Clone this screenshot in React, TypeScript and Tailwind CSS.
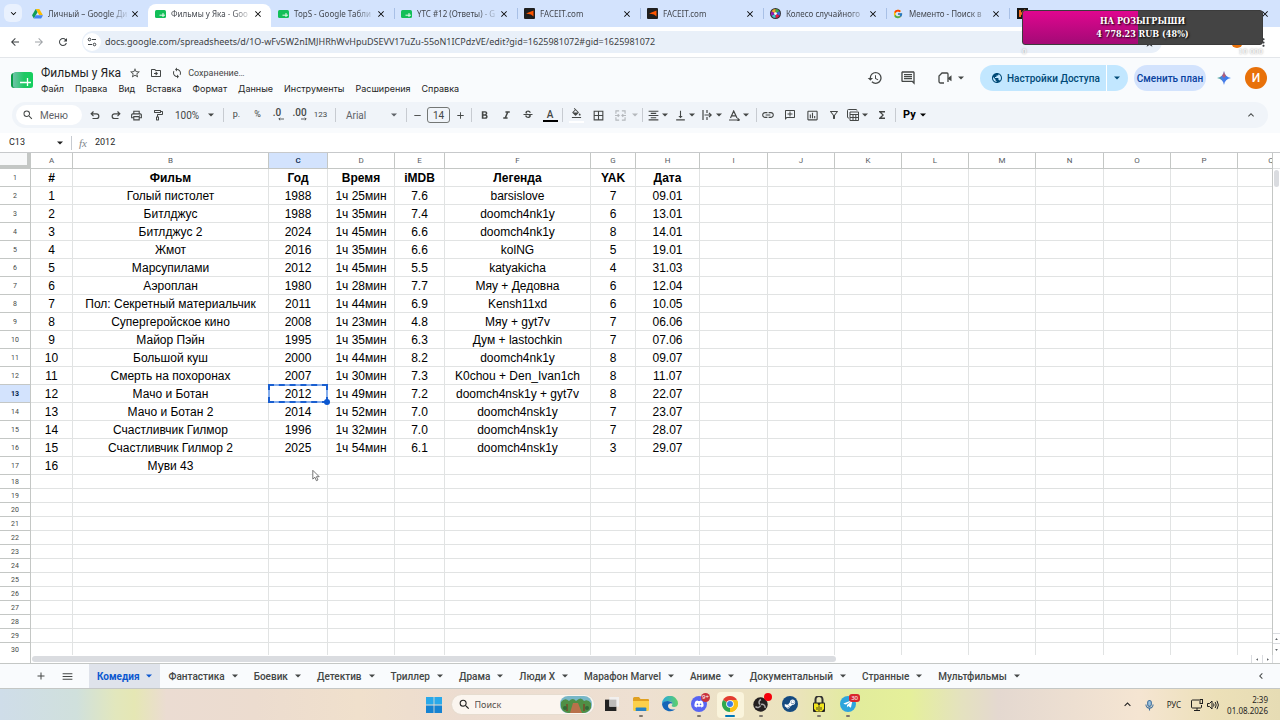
import React from 'react';
import {
    MdStarBorder, MdOutlineDriveFileMove, MdSync, MdHistory, MdOutlineComment, MdPublic, MdSearch,
    MdOutlinePrint, MdOutlineImagesearchRoller, MdFormatBold, MdFormatItalic, MdStrikethroughS, MdFormatColorFill,
    MdBorderAll, MdFormatAlignCenter, MdVerticalAlignBottom, MdLink, MdOutlineAddComment, MdInsertChartOutlined,
    MdOutlineFilterAlt, MdFunctions, MdKeyboardArrowUp, MdKeyboardArrowDown, MdKeyboardArrowLeft, MdAdd, MdRemove,
    MdMenu, MdArrowBack, MdArrowForward, MdRefresh, MdClose, MdMoreVert,
} from 'react-icons/md';
import { FcGoogle } from 'react-icons/fc';
import { FaDiscord, FaSteamSymbol, FaTelegramPlane } from 'react-icons/fa';

const browserTabs = [
    { title: 'Личный – Google Ди', icon: 'drive' },
    { title: 'Фильмы у Яка - Goo', icon: 'sheet', active: true },
    { title: 'TopS - Google Табли', icon: 'sheet' },
    { title: 'YTC #12 (Ответы) - G', icon: 'sheet' },
    { title: 'FACEIT.com', icon: 'faceit' },
    { title: 'FACEIT.com', icon: 'faceit' },
    { title: 'Колесо случайного', icon: 'wheel' },
    { title: 'Мементо - Поиск в', icon: 'google' },
];

const menus = ['Файл', 'Правка', 'Вид', 'Вставка', 'Формат', 'Данные', 'Инструменты', 'Расширения', 'Справка'];

const columns = [
    { name: 'A', width: 'w-[42px]' },
    { name: 'B', width: 'w-[196px]' },
    { name: 'C', width: 'w-[59px]' },
    { name: 'D', width: 'w-[67px]' },
    { name: 'E', width: 'w-[50px]' },
    { name: 'F', width: 'w-[146px]' },
    { name: 'G', width: 'w-[45px]' },
    { name: 'H', width: 'w-[64px]' },
    { name: 'I', width: 'w-[68px]' },
    { name: 'J', width: 'w-[67px]' },
    { name: 'K', width: 'w-[67px]' },
    { name: 'L', width: 'w-[67px]' },
    { name: 'M', width: 'w-[67px]' },
    { name: 'N', width: 'w-[68px]' },
    { name: 'O', width: 'w-[67px]' },
    { name: 'P', width: 'w-[67px]' },
    { name: 'Q', width: 'w-[67px]' },
];

const rows = [
    ['#', 'Фильм', 'Год', 'Время', 'iMDB', 'Легенда', 'YAK', 'Дата'],
    ['1', 'Голый пистолет', '1988', '1ч 25мин', '7.6', 'barsislove', '7', '09.01'],
    ['2', 'Битлджус', '1988', '1ч 35мин', '7.4', 'doomch4nk1y', '6', '13.01'],
    ['3', 'Битлджус 2', '2024', '1ч 45мин', '6.6', 'doomch4nk1y', '8', '14.01'],
    ['4', 'Жмот', '2016', '1ч 35мин', '6.6', 'kolNG', '5', '19.01'],
    ['5', 'Марсупилами', '2012', '1ч 45мин', '5.5', 'katyakicha', '4', '31.03'],
    ['6', 'Аэроплан', '1980', '1ч 28мин', '7.7', 'Мяу + Дедовна', '6', '12.04'],
    ['7', 'Пол: Секретный материальчик', '2011', '1ч 44мин', '6.9', 'Kensh11xd', '6', '10.05'],
    ['8', 'Супергеройское кино', '2008', '1ч 23мин', '4.8', 'Мяу + gyt7v', '7', '06.06'],
    ['9', 'Майор Пэйн', '1995', '1ч 35мин', '6.3', 'Дум + lastochkin', '7', '07.06'],
    ['10', 'Большой куш', '2000', '1ч 44мин', '8.2', 'doomch4nk1y', '8', '09.07'],
    ['11', 'Смерть на похоронах', '2007', '1ч 30мин', '7.3', 'K0chou + Den_Ivan1ch', '8', '11.07'],
    ['12', 'Мачо и Ботан', '2012', '1ч 49мин', '7.2', 'doomch4nsk1y + gyt7v', '8', '22.07'],
    ['13', 'Мачо и Ботан 2', '2014', '1ч 52мин', '7.0', 'doomch4nsk1y', '7', '23.07'],
    ['14', 'Счастливчик Гилмор', '1996', '1ч 32мин', '7.0', 'doomch4nsk1y', '7', '28.07'],
    ['15', 'Счастливчик Гилмор 2', '2025', '1ч 54мин', '6.1', 'doomch4nsk1y', '3', '29.07'],
    ['16', 'Муви 43'],
];

const sheetTabs = ['Комедия', 'Фантастика', 'Боевик', 'Детектив', 'Триллер', 'Драма', 'Люди X', 'Марафон Marvel', 'Аниме', 'Документальный', 'Странные', 'Мультфильмы'];

function Caret() {
    return (
        <svg viewBox="0 0 6 4" className="w-[6px] h-[4px] shrink-0" fill="currentColor">
            <path d="M0 .5h6L3 3.5z" />
        </svg>
    );
}

function SheetLogo({ className }: { className: string }) {
    return (
        <svg viewBox="0 0 22 16" className={className}>
            <defs>
                <linearGradient id="sheetLogo" x1="0" x2="1">
                    <stop offset="0" stopColor="#6fc3a8" />
                    <stop offset=".55" stopColor="#1fc763" />
                    <stop offset="1" stopColor="#14cf5e" />
                </linearGradient>
            </defs>
            <rect width="20" height="15" y="1" rx="3" fill="#0a9c48" />
            <rect x="2" width="20" height="16" rx="2.5" fill="url(#sheetLogo)" />
            <path d="M9 10.500h11M16.500 6v8" stroke="#fff" strokeWidth="1.300" fill="none" />
        </svg>
    );
}

function TabIcon({ icon }: { icon: string }) {
    if (icon === 'drive') {
        return (
            <svg viewBox="0 0 24 22" className="w-[11px] h-[10px]">
                <path d="M8 0h8l8 14h-8z" fill="#fbbc04" />
                <path d="M8 0l4 7L4 21 0 14z" fill="#0f9d58" />
                <path d="M8 14h16l-4 7H4z" fill="#4285f4" />
            </svg>
        );
    }
    if (icon === 'faceit') {
        return (
            <svg viewBox="0 0 11 11" className="w-[11px] h-[11px]">
                <rect width="11" height="11" rx="1" fill="#1f1f1f" />
                <path d="M2 5.500L9.500 2.500v6L7 6.500z" fill="#ff5500" />
            </svg>
        );
    }
    if (icon === 'wheel') {
        return (
            <svg viewBox="0 0 12 12" className="w-[11px] h-[11px]">
                <circle cx="6" cy="6" r="6" fill="#333" />
                <path d="M6 6V1a5 5 0 0 1 4.300 2.500z" fill="#3cb44b" />
                <path d="M6 6l4.300-2.500a5 5 0 0 1 0 5z" fill="#4363d8" />
                <path d="M6 6l4.300 2.500A5 5 0 0 1 6 11z" fill="#e6194b" />
                <path d="M6 6v5a5 5 0 0 1-4.300-2.500z" fill="#42c0d4" />
                <path d="M6 6L1.700 8.500a5 5 0 0 1 0-5z" fill="#911eb4" />
                <path d="M6 6L1.700 3.500A5 5 0 0 1 6 1z" fill="#f0a830" />
                <circle cx="6" cy="6" r="1.500" fill="#fff" />
            </svg>
        );
    }
    if (icon === 'google') return <FcGoogle size={10} />;
    return (
        <svg viewBox="0 0 11 8" className="w-[11px] h-[8px]">
            <rect width="11" height="8" rx="1.500" fill="#12bf58" />
            <path d="M4.500 5.200H10M8 3v4" stroke="#fff" strokeWidth=".9" />
        </svg>
    );
}

function TabStrip() {
    return (
        <div className="flex h-[27px] bg-[#d3e3fd] font-['Noto_Sans',sans-serif]">
            <div className="w-[25px] shrink-0 pl-1 pt-1">
                <button aria-label="Поиск вкладок" className="flex items-center justify-center w-[18px] h-[18px] rounded-md bg-[#e9f1fe]">
                    <MdKeyboardArrowDown size={11} />
                </button>
            </div>
            {browserTabs.map((tab, i) => (
                <div
                    key={i}
                    className={tab.active
                        ? 'flex items-center w-[123px] shrink-0 mt-1 pb-1 pl-[7px] bg-white rounded-t-lg'
                        : 'flex items-center w-[123px] shrink-0 mt-1 pb-1'}
                >
                    {!tab.active && <span className={i > 2 ? 'w-px h-[11px] mr-[6px] bg-[#a8c0e6]' : 'w-px mr-[6px]'} />}
                    <span className="w-[12px] mr-1 flex shrink-0"><TabIcon icon={tab.icon} /></span>
                    <span className="w-[82px] shrink-0 whitespace-nowrap text-[8px] leading-[14px] text-[#43474e] [mask-image:linear-gradient(to_right,black_75%,transparent)]">{tab.title}</span>
                    <button aria-label="Закрыть вкладку"><MdClose size={10} /></button>
                </div>
            ))}
            <div className="flex items-center flex-1 mt-1 pb-1 pr-[10px]">
                <span className="w-px h-[11px] mr-[7px] bg-[#a8c0e6]" />
                <svg viewBox="0 0 11 11" className="w-[11px] h-[11px]">
                    <rect width="11" height="11" fill="#161616" />
                    <path d="M3 2v7M8.500 2L4.500 5.500l4 3.500" stroke="#f26b1d" strokeWidth="2" fill="none" />
                </svg>
                <button aria-label="Закрыть окно" className="ml-auto"><MdClose size={10} /></button>
            </div>
        </div>
    );
}

function AddressBar() {
    return (
        <div className="flex items-center h-[31px] pl-[9px] pr-[10px] bg-white border-b border-[#e3e6ea] font-['Noto_Sans',sans-serif] text-[#3c4043]">
            <button aria-label="Назад" className="w-3 mr-3"><MdArrowBack size={12} /></button>
            <button aria-label="Вперёд" className="w-3 mr-3 text-[#a0a4a8]"><MdArrowForward size={12} /></button>
            <button aria-label="Обновить" className="w-3 mr-[13px]"><MdRefresh size={12} /></button>
            <div className="flex items-center flex-1 h-[22px] pl-[1px] rounded-full bg-[#e9f0f9]">
                <span className="flex items-center justify-center w-[18px] h-[18px] rounded-full bg-white">
                    <svg viewBox="0 0 10 10" className="w-[10px] h-[10px]" fill="none" stroke="currentColor">
                        <circle cx="2.500" cy="2.500" r="1.300" />
                        <path d="M5 2.500h4M1 7.500h4" />
                        <circle cx="7.500" cy="7.500" r="1.300" />
                    </svg>
                </span>
                <input
                    aria-label="Адресная строка"
                    readOnly
                    className="flex-1 ml-1 bg-transparent text-[9px] leading-[14px] outline-none"
                    value="docs.google.com/spreadsheets/d/1O-wFv5W2nIMJHRhWvHpuDSEVV17uZu-55oN1ICPdzVE/edit?gid=1625981072#gid=1625981072"
                />
                <MdStarBorder size={11} className="mr-[7px]" />
            </div>
            <div className="flex items-center justify-end w-[108px] gap-[14px]">
                <span className="w-3 h-3 rounded-full bg-[#e8710a]" />
                <MdMoreVert size={13} />
            </div>
        </div>
    );
}

function DocHeader() {
    return (
        <header className="flex items-center h-[44px] pl-[11px] pr-[13px] text-[#444746]">
            <SheetLogo className="w-[22px] h-[16px] shrink-0" />
            <div className="ml-2 pt-px">
                <div className="flex items-center h-[16px]">
                    <h1 className="text-xs leading-4 text-[#1f1f1f]">Фильмы у Яка</h1>
                    <button aria-label="Пометить" className="ml-2"><MdStarBorder size={12} /></button>
                    <button aria-label="Переместить" className="ml-[9px]"><MdOutlineDriveFileMove size={12} /></button>
                    <MdSync size={12} className="ml-[9px]" />
                    <span className="ml-[5px] text-[9px] leading-3">Сохранение…</span>
                </div>
                <nav className="flex gap-[11px] h-[16px] font-['Inter',sans-serif] text-[#1f1f1f]">
                    {menus.map((menu) => (
                        <button key={menu} className="text-[9px] leading-4">{menu}</button>
                    ))}
                </nav>
            </div>
            <div className="flex items-center ml-auto mb-1">
                <button aria-label="История версий"><MdHistory size={16} /></button>
                <button aria-label="Комментарии" className="ml-[17px]"><MdOutlineComment size={16} /></button>
                <button aria-label="Видеовстреча" className="flex items-center gap-[6px] ml-[22px]">
                    <svg viewBox="0 0 14 12" className="w-[14px] h-[12px]" fill="none" stroke="currentColor" strokeWidth="1.300">
                        <path d="M6 11H2.500A1.500 1.500 0 0 1 1 9.500V4L4 1h5a1 1 0 0 1 1 1v8" />
                        <path d="M10 6l3.500-2.800v6.100L10 7z" fill="currentColor" stroke="none" />
                    </svg>
                    <Caret />
                </button>
                <div className="flex ml-4 h-[26px] rounded-full bg-[#c2e7ff] text-[#004a77] overflow-hidden">
                    <button className="flex items-center gap-1 w-[127px] pl-[11px] text-[10px] font-medium whitespace-nowrap border-r border-white">
                        <MdPublic size={12} className="shrink-0" />Настройки Доступа
                    </button>
                    <button aria-label="Быстрый доступ" className="flex items-center w-[21px] pl-[7px]"><Caret /></button>
                </div>
                <button className="ml-[6px] w-[72px] h-[26px] rounded-full bg-[#d3e3fd] text-[#0842a0] text-[10px] font-medium whitespace-nowrap">Сменить план</button>
                <button aria-label="Gemini" className="ml-[11px]">
                    <svg viewBox="0 0 14 14" className="w-[14px] h-[14px]">
                        <defs>
                            <linearGradient id="spark" x1="0" y1=".6" x2="1" y2=".4">
                                <stop offset="0" stopColor="#3fae6a" />
                                <stop offset=".4" stopColor="#4a7de8" />
                                <stop offset="1" stopColor="#2f7bf0" />
                            </linearGradient>
                        </defs>
                        <path d="M7 0c.6 4 3 6.400 7 7-4 .6-6.400 3-7 7-.6-4-3-6.400-7-7 4-.6 6.400-3 7-7z" fill="url(#spark)" />
                        <path d="M7 0c.3 2 1 3.600 2.100 4.800L7 7 4.900 4.800C6 3.600 6.700 2 7 0z" fill="#e0524a" opacity=".7" />
                    </svg>
                </button>
                <button aria-label="Аккаунт" className="ml-[14px] w-[22px] h-[22px] rounded-full bg-[#e8710a] text-white text-xs font-medium">И</button>
            </div>
        </header>
    );
}

function Tool({ label, children, narrow }: { label: string; children: React.ReactNode; narrow?: boolean }) {
    return (
        <button aria-label={label} className={narrow ? 'flex items-center justify-center w-[21px] h-5' : 'flex items-center justify-center w-[22px] h-5'}>
            {children}
        </button>
    );
}

function DropTool({ label, children }: { label: string; children: React.ReactNode }) {
    return (
        <button aria-label={label} className="flex items-center h-5">
            <span className="flex justify-center w-4">{children}</span>
            <span className="flex justify-center w-2"><Caret /></span>
        </button>
    );
}

function Divider() {
    return <span className="w-px h-[14px] bg-[#c7cbd1]" />;
}

function Toolbar() {
    return (
        <div className="flex items-center h-[26px] mx-3 pl-1 pr-[11px] rounded-full bg-[#f0f4f9] text-[#444746] text-[10px]">
            <button className="flex items-center gap-[6px] w-[66px] h-5 pl-[6px] mr-[2px] rounded-full bg-white text-[#5f6368]">
                <MdSearch size={12} className="text-[#444746]" />Меню
            </button>
            <Tool label="Отменить" narrow>
                <svg viewBox="0 0 10 10" className="w-[10px] h-[10px]" fill="none" stroke="currentColor" strokeWidth="1.200"><path d="M3.500 1.500L1.200 3.800l2.300 2.300M1.200 3.800H6.500a2.300 2.300 0 0 1 0 4.700H2.500" /></svg>
            </Tool>
            <Tool label="Повторить" narrow>
                <svg viewBox="0 0 10 10" className="w-[10px] h-[10px]" fill="none" stroke="currentColor" strokeWidth="1.200"><path d="M6.500 1.500l2.300 2.300-2.300 2.300M8.800 3.800H3.500a2.300 2.300 0 0 0 0 4.700h4" /></svg>
            </Tool>
            <Tool label="Печать" narrow><MdOutlinePrint size={13} /></Tool>
            <Tool label="Копировать форматирование" narrow><MdOutlineImagesearchRoller size={12} className="-scale-x-100" /></Tool>
            <button className="flex items-center justify-between w-[55px] pl-[7px] pr-[9px]">100%<Caret /></button>
            <Divider />
            <div className="flex pl-[2px] pr-1">
                <Tool label="Денежный формат" narrow><span className="text-[9px]">р.</span></Tool>
                <Tool label="Процентный формат" narrow><span className="text-[9px]">%</span></Tool>
                <Tool label="Уменьшить число знаков" narrow><span className="flex flex-col text-[10px] font-medium leading-[8px] pr-[3px]">.0<DecimalArrow /></span></Tool>
                <Tool label="Увеличить число знаков" narrow><span className="flex flex-col text-[10px] font-medium leading-[8px]">.00<DecimalArrow flip /></span></Tool>
                <Tool label="Другие форматы" narrow><span className="text-[8px]">123</span></Tool>
            </div>
            <Divider />
            <button className="flex items-center justify-between w-[70px] pl-[10px] pr-[9px] text-[#5f6368]">Arial<Caret /></button>
            <Divider />
            <button aria-label="Уменьшить шрифт" className="flex justify-center w-5"><MdRemove size={11} /></button>
            <input aria-label="Размер шрифта" readOnly value="14" className="w-[23px] h-4 rounded-[3px] border border-[#747775] text-center text-[10px] leading-[14px]" />
            <button aria-label="Увеличить шрифт" className="flex justify-center w-5 mr-px"><MdAdd size={11} /></button>
            <Divider />
            <div className="flex px-px">
                <Tool label="Полужирный"><MdFormatBold size={13} /></Tool>
                <Tool label="Курсив"><MdFormatItalic size={13} /></Tool>
                <Tool label="Зачеркнутый"><MdStrikethroughS size={12} /></Tool>
                <Tool label="Цвет текста"><span className="flex flex-col items-center w-[15px] border-b-2 border-black text-[10px] font-medium leading-[11px]">A</span></Tool>
            </div>
            <Divider />
            <div className="flex items-center pl-[2px] pr-[3px]">
                <Tool label="Цвет заливки"><span className="flex justify-center w-[15px] pb-[3px] border-b-2 border-white"><MdFormatColorFill size={11} viewBox="0 0 24 20" /></span></Tool>
                <Tool label="Границы"><MdBorderAll size={13} /></Tool>
                <Tool label="Объединить ячейки">
                    <svg viewBox="0 0 12 12" className="w-[11px] h-[11px] text-[#b4b8bc]" fill="none" stroke="currentColor" strokeWidth="1.200"><path d="M4.500 1H1v3M7.500 1H11v3M4.500 11H1V8M7.500 11H11V8M0 6h4M8 6h4M3 4.500L4.500 6 3 7.500M9 4.500L7.500 6 9 7.500" /></svg>
                </Tool>
                <span className="flex justify-center w-2 text-[#b4b8bc]"><Caret /></span>
            </div>
            <Divider />
            <div className="flex gap-[3px] pl-[2px] pr-[6px]">
                <DropTool label="Горизонтальное выравнивание"><MdFormatAlignCenter size={13} /></DropTool>
                <DropTool label="Вертикальное выравнивание"><MdVerticalAlignBottom size={13} /></DropTool>
                <DropTool label="Перенос текста">
                    <svg viewBox="0 0 10 10" className="w-[10px] h-[10px]" fill="none" stroke="currentColor" strokeWidth="1.200"><path d="M1 0v10M5 0v3M5 7v3M2.500 5H9M7 2.800L9.200 5 7 7.200" /></svg>
                </DropTool>
                <DropTool label="Поворот текста">
                    <svg viewBox="0 0 11 11" className="w-[11px] h-[11px]" fill="none" stroke="currentColor" strokeWidth="1.200"><path d="M1.500 8L4.700 1 8 8M2.600 5.800h4.200M0 10h10M8.500 8.200L10.300 10 8.500 11" /></svg>
                </DropTool>
            </div>
            <Divider />
            <div className="flex items-center pr-[2px]">
                <Tool label="Вставить ссылку"><MdLink size={14} /></Tool>
                <Tool label="Добавить комментарий"><MdOutlineAddComment size={12} className="-scale-x-100" /></Tool>
                <Tool label="Вставить диаграмму"><MdInsertChartOutlined size={13} /></Tool>
                <Tool label="Создать фильтр"><MdOutlineFilterAlt size={12} /></Tool>
                <DropTool label="Преобразовать в таблицу">
                    <svg viewBox="0 0 12 12" className="w-[12px] h-[12px]" fill="none" stroke="currentColor"><path d="M2 9H1.500a1 1 0 0 1-1-1V1.500a1 1 0 0 1 1-1H9a1 1 0 0 1 1 1M3 3h8.500v8.500H3zM3 5.500h8.500M3 8.500h8.500M6 5.500v6M8.800 5.500v6" /></svg>
                </DropTool>
                <span className="ml-[2px]"><Tool label="Функции"><MdFunctions size={12} /></Tool></span>
            </div>
            <Divider />
            <button className="flex items-center gap-1 ml-[7px] text-[11px] leading-5 font-bold text-black">Py<Caret /></button>
            <button aria-label="Скрыть меню" className="ml-auto"><MdKeyboardArrowUp size={12} /></button>
        </div>
    );
}

function DecimalArrow({ flip }: { flip?: boolean }) {
    return (
        <svg viewBox="0 0 7 4" className={flip ? 'w-[6px] h-[4px] self-end -scale-x-100' : 'w-[6px] h-[4px] self-end -mr-[3px]'} fill="none" stroke="currentColor">
            <path d="M7 2H1M2.500.5L1 2l1.500 1.500" />
        </svg>
    );
}

function FormulaBar() {
    return (
        <div className="flex items-center h-5 mt-[5px] bg-white border-b border-[#c7c9cb] text-[9px] text-[#1f1f1f]">
            <button className="flex items-center justify-between w-[71px] pl-[9px] pr-2">C13<Caret /></button>
            <Divider />
            <label htmlFor="formula" className="ml-[7px] w-[16px] font-['Liberation_Serif',serif] italic text-[11px] leading-4 text-[#80868b]">fx</label>
            <input id="formula" readOnly value="2012" className="flex-1 outline-none" />
        </div>
    );
}

function Grid() {
    return (
        <div className="flex flex-1 min-h-0 bg-white">
            <div className="flex-1 min-w-0 overflow-hidden">
                <table className="table-fixed w-max border-separate border-spacing-0 font-['Liberation_Sans',Arial,sans-serif] text-black">
                    <thead>
                        <tr className="h-4">
                            <th className="w-[31px] h-4 p-0 border-r-4 border-b-4 border-[#c4c7c5] bg-[#f8f9fa]" aria-label="Выделить все" />
                            {columns.map((col) => (
                                <th
                                    key={col.name}
                                    className={`${col.width} h-4 p-0 border-r border-b border-[#c4c7c5] font-['Roboto',sans-serif] text-[8px] leading-[14px] ${col.name === 'C' ? 'bg-[#d3e3fd] font-medium text-[#041e49]' : 'font-normal text-[#575b5f]'}`}
                                >
                                    {col.name}
                                </th>
                            ))}
                        </tr>
                    </thead>
                    <tbody>
                        {Array.from({ length: 30 }, (_, r) => {
                            const cells = rows[r] ?? [];
                            const height = r < rows.length ? 'h-[18px]' : 'h-[14px]';
                            return (
                                <tr key={r} className={height}>
                                    <th className={`${height} p-0 border-r border-b border-[#c4c7c5] font-['Roboto',sans-serif] text-[7px] leading-[12px] ${r === 12 ? 'bg-[#d3e3fd] font-bold text-[#041e49]' : 'font-normal text-[#444746]'}`}>
                                        {r + 1}
                                    </th>
                                    {columns.map((col, c) => (
                                        <td
                                            key={col.name}
                                            className={`${height} p-0 border-r border-b border-[#e1e3e3] text-center whitespace-nowrap text-xs leading-[12px] ${r === 0 ? 'font-bold' : ''} ${r === 12 && c === 2 ? 'relative' : ''}`}
                                        >
                                            {cells[c]}
                                            {r === 12 && c === 2 && (
                                                <>
                                                    <span className="absolute -left-px -top-px -right-px -bottom-px border-2 border-[#86aeec]" />
                                                    <span className="absolute -left-px -top-px -right-px -bottom-px border-2 border-dashed border-[#1a5fd0]" />
                                                    <span className="absolute -right-[3px] -bottom-[3px] w-[6px] h-[6px] rounded-full bg-[#0b57d0]" />
                                                </>
                                            )}
                                        </td>
                                    ))}
                                </tr>
                            );
                        })}
                    </tbody>
                </table>
            </div>
            <div className="flex flex-col items-center w-2 border-l border-[#c4c7c5] text-[#5f6368]">
                <span className="w-full h-4 border-b border-[#e1e3e3]" />
                <span className="w-[5px] h-[17px] mt-px rounded-full bg-[#dadce0]" />
                <span className="flex items-center justify-center w-full h-[10px] mt-auto border-t border-[#dadce0]"><ScrollArrow up /></span>
                <span className="flex items-center justify-center w-full h-[12px] border-t border-[#dadce0]"><ScrollArrow /></span>
            </div>
        </div>
    );
}

function ScrollArrow({ up }: { up?: boolean }) {
    return (
        <svg viewBox="0 0 4 3" className={up ? 'w-[3px] h-[2px] rotate-180' : 'w-[3px] h-[2px]'} fill="currentColor"><path d="M0 0h4L2 3z" /></svg>
    );
}

function HorizontalScroll() {
    return (
        <div className="flex items-center h-2 bg-white text-[#5f6368]">
            <span className="w-[31px] h-full border-r border-[#c4c7c5]" />
            <div className="flex-1 px-px"><span className="block w-[66%] h-[6px] rounded-full bg-[#dadce0]" /></div>
            <span className="flex items-center justify-center w-[11px] h-full border-l border-[#dadce0]"><svg viewBox="0 0 3 4" className="w-[2px] h-[3px]" fill="currentColor"><path d="M3 0v4L0 2z" /></svg></span>
            <span className="flex items-center justify-center w-[11px] h-full border-x border-[#dadce0]"><svg viewBox="0 0 3 4" className="w-[2px] h-[3px]" fill="currentColor"><path d="M0 0v4l3-2z" /></svg></span>
            <span className="w-[7px]" />
        </div>
    );
}

function SheetTabs() {
    return (
        <div className="flex items-center h-[26px] pl-[35px] pr-[13px] border-y border-[#c4c7c5] bg-[#f9fbfd] text-[#444746]">
            <button aria-label="Добавить лист" className="w-[13px]"><MdAdd size={12} /></button>
            <button aria-label="Все листы" className="w-[14px] ml-[13px]"><MdMenu size={13} /></button>
            <div className="flex h-full ml-[14px]">
                {sheetTabs.map((name, i) => (
                    <button
                        key={name}
                        className={i === 0
                            ? 'flex items-center gap-[7px] h-full px-2 bg-[#dfe3eb] text-[#0b57d0] text-[10px] font-bold whitespace-nowrap'
                            : 'flex items-center gap-[7px] h-full px-2 text-[10px] font-medium whitespace-nowrap'}
                    >
                        {name}<Caret />
                    </button>
                ))}
            </div>
            <button aria-label="Скрыть панель" className="ml-auto"><MdKeyboardArrowLeft size={12} /></button>
        </div>
    );
}

function TaskApp({ label, running, active, children }: { label: string; running?: boolean; active?: boolean; children: React.ReactNode }) {
    return (
        <button aria-label={label} className={active ? 'flex flex-col items-center w-[27px] h-[26px] mx-[3px] pt-1 rounded bg-[#faf4dc]' : 'flex flex-col items-center w-[25px] h-[26px] mx-[2px] pt-1'}>
            <span className="relative flex items-center justify-center h-4">{children}</span>
            {running && <span className={active ? 'w-[10px] h-[2px] mt-[3px] rounded-full bg-[#0078b8]' : 'w-1 h-[2px] mt-[3px] rounded-full bg-[#7d766c]'} />}
        </button>
    );
}

function Taskbar() {
    return (
        <footer className="grid grid-cols-[1fr_auto_1fr] items-center h-[31px] bg-[linear-gradient(90deg,#cfdde9_0%,#d0e0dc_6%,#e2e7bd_9%,#e5e7b4_10.5%,#ebdcd2_13%,#ecdccf_20%,#f0e0cc_28%,#ecdcd0_36%,#eee0d2_50%,#ebe3bd_62%,#e2ec9c_67%,#e5f09a_71%,#e4e2be_75%,#e4d8d0_78%,#f5e5d2_89%,#ece0b8_95%,#e6dcb4_100%)] font-['Noto_Sans',sans-serif] text-[#1f1f1f]">
            <span />
            <div className="flex items-center pl-2">
                <button aria-label="Пуск" className="w-[16px] mr-[9px]">
                    <svg viewBox="0 0 16 16" className="w-4 h-4">
                        <path d="M0 0h7.600v7.600H0zM8.400 0H16v7.600H8.400z" fill="#29a9ea" />
                        <path d="M0 8.400h7.600V16H0zM8.400 8.400H16V16H8.400z" fill="#1583d2" />
                    </svg>
                </button>
                <div className="flex items-center w-[144px] h-[21px] mr-[3px] pl-[6px] pr-[2px] rounded-full bg-[#fbf5ef] border border-[#e6dccf]">
                    <MdSearch size={13} />
                    <input aria-label="Поиск" placeholder="Поиск" className="flex-1 w-0 ml-[4px] text-[9px] placeholder:text-[#55504c] outline-none" />
                    <svg viewBox="0 0 32 17" className="w-[32px] h-[17px]">
                        <rect width="32" height="17" rx="8" fill="#78b7c8" />
                        <path d="M1 6q4-5 8-1 4-4 7 0 5-5 8 0 4-2 7 2v5q-3 5-8 5H8q-6-1-7-6z" fill="#4f8f45" />
                        <path d="M13 7h5l4 10H10z" fill="#b9714a" />
                        <path d="M7 8v7M24 8v7" stroke="#7a4a2a" strokeWidth="1.500" />
                        <circle cx="5" cy="12" r="2" fill="#2f6b38" />
                        <circle cx="27" cy="12" r="2" fill="#2f6b38" />
                    </svg>
                </div>
                <TaskApp label="Представление задач">
                    <svg viewBox="0 0 16 16" className="w-[14px] h-[14px]"><rect y="3" width="13" height="13" fill="#222" /><rect x="5" width="11" height="11" fill="#f1efee" /><rect x="5" y="3" width="8" height="8" fill="#bdbbb9" /></svg>
                </TaskApp>
                <TaskApp label="Проводник" running>
                    <svg viewBox="0 0 16 14" className="w-4 h-[14px]"><path d="M0 1.500A1.500 1.500 0 0 1 1.500 0H6l1.500 2H15a1 1 0 0 1 1 1v3H0z" fill="#e0a021" /><path d="M0 4h16v8.500a1.500 1.500 0 0 1-1.500 1.500h-13A1.500 1.500 0 0 1 0 12.500z" fill="#fbd04b" /><path d="M3.500 10.500h9a.8.8 0 0 1 .8.8V14H2.700v-2.700a.8.8 0 0 1 .8-.8z" fill="#2583c5" /></svg>
                </TaskApp>
                <TaskApp label="Microsoft Edge">
                    <svg viewBox="0 0 16 16" className="w-4 h-4">
                        <defs><linearGradient id="edge" x1="0" x2="1"><stop offset="0" stopColor="#29a8e0" /><stop offset="1" stopColor="#5fd068" /></linearGradient></defs>
                        <path d="M0 8a8 8 0 0 1 16-.5C16 10 14 11 12 11c-1.500 0-2.300-.6-2.300-1.200 0-.5.700-.9.700-2C10.400 6 8.500 5 6.500 5 3.500 5 .6 6.500 0 8z" fill="url(#edge)" />
                        <path d="M0 8c.6-2 3-3 5.500-3C8 5 10.400 6 10.400 7.800 9.500 6.500 6 7 6 10c0 3 3.500 4.500 7.500 3A8 8 0 0 1 0 8z" fill="#1466b8" />
                    </svg>
                </TaskApp>
                <TaskApp label="Discord" running>
                    <span className="flex items-center justify-center w-4 h-4 rounded-full bg-[#5865f2] text-white"><FaDiscord size={10} /></span>
                    <span className="absolute -top-[3px] -right-[3px] flex items-center justify-center w-[9px] h-[9px] rounded-full bg-[#c8323c] text-white text-[6px] leading-none">9+</span>
                </TaskApp>
                <TaskApp label="Google Chrome" running active>
                    <svg viewBox="0 0 16 16" className="w-4 h-4">
                        <path d="M8 8L1.070 4A8 8 0 0 1 14.930 4z" fill="#e33b2e" />
                        <path d="M8 8l6.930-4A8 8 0 0 1 8 16z" fill="#fbc116" />
                        <path d="M8 8v8A8 8 0 0 1 1.070 4z" fill="#2da94f" />
                        <path d="M8 4h6.930A8 8 0 0 1 8 16l3.460-6z" fill="#fbc116" />
                        <circle cx="8" cy="8" r="3.800" fill="#fff" />
                        <circle cx="8" cy="8" r="3" fill="#3b7de8" />
                    </svg>
                </TaskApp>
                <TaskApp label="OBS Studio" running>
                    <svg viewBox="0 0 16 16" className="w-4 h-4">
                        <circle cx="7.500" cy="8.500" r="7.200" fill="#231f20" />
                        <path d="M7 8.500a3 3 0 0 1 1-5M8 8.500a3 3 0 0 1 4 3.500M7.500 9.500a3 3 0 0 1-5 1" stroke="#aaa8a8" strokeWidth="1.500" fill="none" />
                    </svg>
                    <span className="absolute -top-[3px] -right-[3px] w-2 h-2 rounded-full bg-[#f5000a]" />
                </TaskApp>
                <TaskApp label="Steam">
                    <span className="flex items-center justify-center w-4 h-4 rounded-full bg-[#154a80] text-white"><FaSteamSymbol size={12} /></span>
                </TaskApp>
                <TaskApp label="Пароли" running>
                    <svg viewBox="0 0 12 16" className="w-3 h-4">
                        <path d="M2.500 8V3.500a3.500 3.500 0 0 1 7 0V8" stroke="#333" strokeWidth="2" fill="none" />
                        <rect y="6.500" width="12" height="9.500" rx="1" fill="#222" />
                        <path d="M1 7.500h3.500l1.500 2.500 1.500-2.500H11V13l-2.500 2.500h-5L1 13z" fill="#f0e41c" />
                        <path d="M4 11v3M8 11v3M6 10v5" stroke="#222" strokeWidth=".8" />
                    </svg>
                </TaskApp>
                <TaskApp label="Telegram" running>
                    <span className="flex items-center justify-center w-4 h-4 rounded-full bg-[#2da5dc] text-white"><FaTelegramPlane size={10} /></span>
                    <span className="absolute -top-[2px] -right-[4px] px-[2px] rounded-[3px] bg-[#d8262c] text-white text-[6px] leading-[8px]">30</span>
                </TaskApp>
            </div>
            <div className="flex items-center justify-end pr-3">
                <button aria-label="Скрытые значки"><MdKeyboardArrowUp size={13} /></button>
                <svg viewBox="0 0 10 12" className="w-[9px] h-[12px] ml-[11px]" fill="none" stroke="#3f6f9c" strokeWidth="1.200"><rect x="3" y="1" width="4" height="6.500" rx="2" fill="#9cc3e0" /><path d="M1 5.500a4 4 0 0 0 8 0M5 9.500V12" /></svg>
                <span className="ml-[13px] text-[8px]">РУС</span>
                <svg viewBox="0 0 12 12" className="w-3 h-3 ml-[10px]" fill="none" stroke="currentColor"><path d="M8 1H1.500a1 1 0 0 0-1 1v6a1 1 0 0 0 1 1h8a1 1 0 0 0 1-1V6M3 11.500h6M6 9v2.500" /><rect x="9" y=".5" width="2.500" height="4" /></svg>
                <svg viewBox="0 0 12 12" className="w-3 h-3 ml-[4px]" fill="none" stroke="currentColor"><path d="M.5 4.500h2L5 2v8L2.500 7.500h-2zM6.500 4.500q1 1.500 0 3M8.200 3q2 3 0 6M10 1.800q2.800 4.200 0 8.400" /></svg>
                <div className="ml-2 text-right text-[8px] leading-[11px]">
                    <div>2:39</div>
                    <div>01.08.2026</div>
                </div>
            </div>
        </footer>
    );
}

function GoalWidget() {
    return (
        <div className="absolute top-[10px] right-[17px] w-[241px]">
            <div className="flex flex-col items-center justify-center h-[35px] rounded-[3px] border border-[#3b3b3b] bg-[linear-gradient(to_right,transparent_48%,#444_48%),linear-gradient(to_bottom,#e0068f,#a30a76)] font-['Roboto_Slab','DejaVu_Serif_Condensed','DejaVu_Serif',serif] text-[9px] leading-[13px] font-bold text-white [text-shadow:1px_1px_2px_#000]">
                <span>НА РОЗЫГРЫШИ</span>
                <span>4 778.23 RUB (48%)</span>
            </div>
            <div className="flex justify-between mt-px font-['DejaVu_Serif',serif] text-[7px] leading-3 text-white [text-shadow:0_0_2px_#777]">
                <span>0</span>
                <span>10 000</span>
            </div>
        </div>
    );
}

export default function App() {
    return (
        <div className="relative flex flex-col h-screen overflow-hidden bg-[#f9fbfd] font-['Roboto',sans-serif]">
            <TabStrip />
            <AddressBar />
            <DocHeader />
            <Toolbar />
            <FormulaBar />
            <Grid />
            <HorizontalScroll />
            <SheetTabs />
            <Taskbar />
            <GoalWidget />
            <svg viewBox="0 0 10 15" className="absolute left-[312px] top-[469px] w-[8px] h-[13px]">
                <path d="M1 1v11l2.600-2.300L5.500 14l2-1-2-4H9z" fill="#fff" stroke="#555" />
            </svg>
        </div>
    );
}
